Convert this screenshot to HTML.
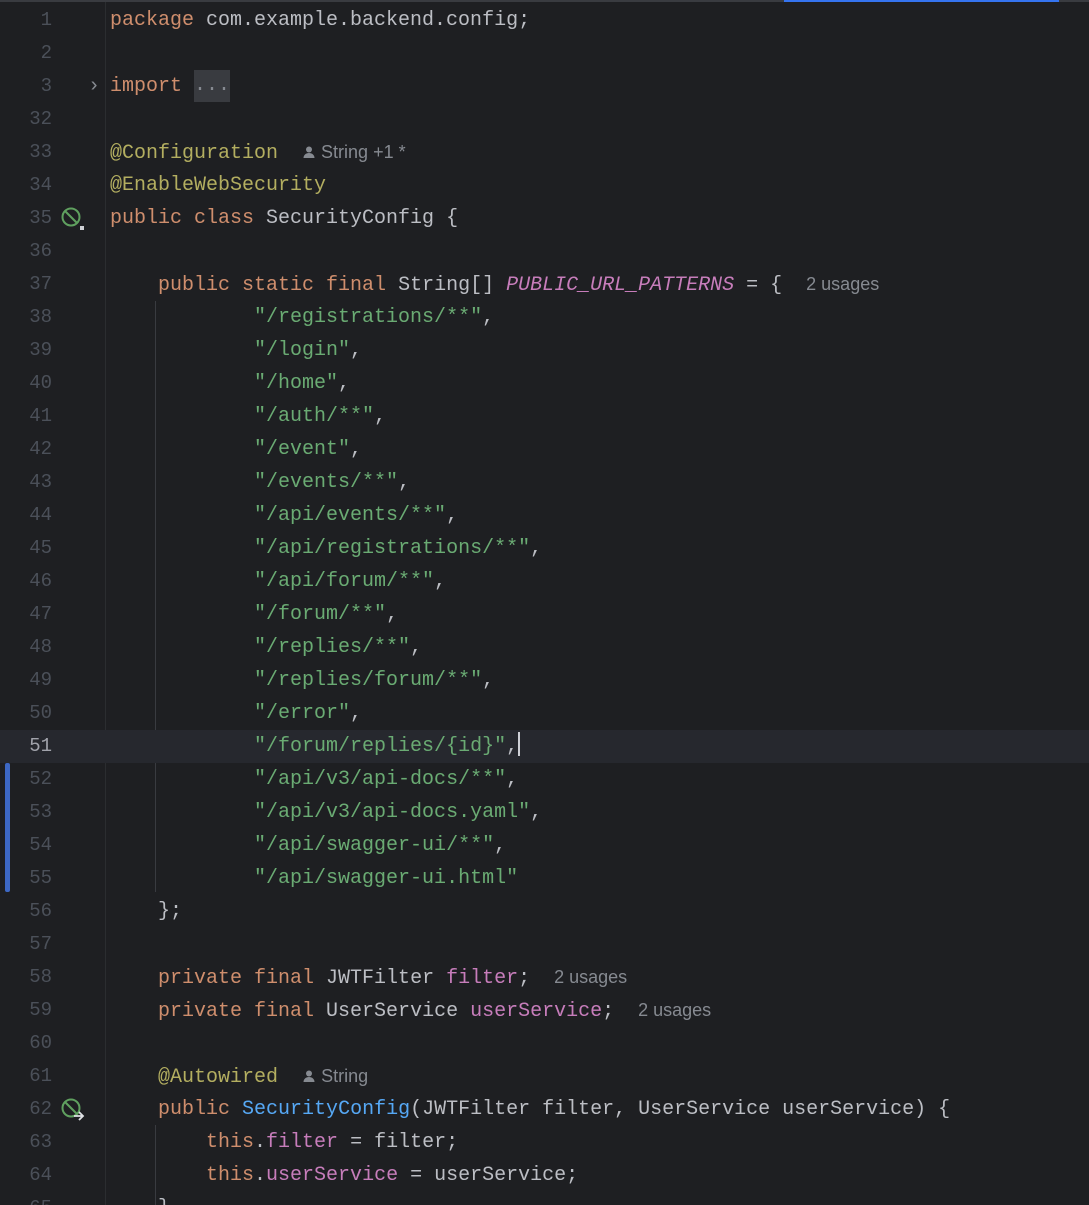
<!DOCTYPE html>
<html><head><meta charset="utf-8"><style>
html,body{margin:0;padding:0;background:#1e1f22;width:1089px;height:1205px;overflow:hidden;position:relative}
.l{position:absolute;left:0;width:1089px;height:33px;line-height:33px;font-family:"Liberation Mono",monospace;font-size:20px;color:#bcbec4;white-space:pre}
.n{position:absolute;left:0;width:52px;text-align:right;color:#4b5059;font-size:19px}
.c{position:absolute;left:110px}
.k{color:#cf8e6d}.s{color:#6aab73}.a{color:#b3ae60}.f{color:#c77dbb}.fi{color:#c77dbb;font-style:italic}.m{color:#56a8f5}
.h{font-family:"Liberation Sans",sans-serif;font-size:18px;color:#868a91}
.cur{background:#26282e}
</style></head><body>
<div style="position:absolute;left:0;top:0;width:1089px;height:2px;background:#393b40"></div>
<div style="position:absolute;left:784px;top:0;width:275px;height:2px;background:#3574f0"></div>
<div style="position:absolute;left:105px;top:2px;width:1px;height:1203px;background:#2b2d30"></div>
<div style="position:absolute;left:5px;top:763px;width:5px;height:129px;background:#3d68c4;border-radius:2px"></div>
<div style="position:absolute;left:155px;top:301px;width:1px;height:591px;background:#393b40"></div>
<div style="position:absolute;left:155px;top:1125px;width:1px;height:80px;background:#393b40"></div>
<div class="l cur" style="top:730px"></div>

<div class="l" style="top:4px"><span class="n">1</span><span class="c"><span class="k">package</span> com.example.backend.config;</span></div>
<div class="l" style="top:37px"><span class="n">2</span></div>
<div class="l" style="top:70px"><span class="n">3</span><span style="position:absolute;left:88px;color:#868a91">›</span><span class="c"><span class="k">import</span> <span style="background:#393b40;color:#868a91;display:inline-block;height:32px;line-height:32px;vertical-align:top">...</span></span></div>
<div class="l" style="top:103px"><span class="n">32</span></div>
<div class="l" style="top:136px"><span class="n">33</span><span class="c"><span class="a">@Configuration</span>  <span class="h"><svg width="14" height="14" viewBox="0 0 14 14" style="vertical-align:-1px"><circle cx="7" cy="4.5" r="3" fill="#868a91"/><path d="M1.5 13c0-3 2.5-5 5.5-5s5.5 2 5.5 5z" fill="#868a91"/></svg> String +1 *</span></span></div>
<div class="l" style="top:169px"><span class="n">34</span><span class="c"><span class="a">@EnableWebSecurity</span></span></div>
<div class="l" style="top:202px"><span class="n">35</span><svg style="position:absolute;left:61px;top:5px" width="24" height="24" viewBox="0 0 24 24"><circle cx="10" cy="10" r="8.5" fill="none" stroke="#5fa05f" stroke-width="2"/><path d="M4 4L16 16" stroke="#5fa05f" stroke-width="2"/><path d="M19 19h4v4h-4z" fill="#cfd1d6"/></svg><span class="c"><span class="k">public class</span> SecurityConfig {</span></div>
<div class="l" style="top:235px"><span class="n">36</span></div>
<div class="l" style="top:268px"><span class="n">37</span><span class="c">    <span class="k">public static final</span> String[] <span class="fi">PUBLIC_URL_PATTERNS</span> = {  <span class="h">2 usages</span></span></div>
<div class="l" style="top:301px"><span class="n">38</span><span class="c">            <span class="s">"/registrations/**"</span>,</span></div>
<div class="l" style="top:334px"><span class="n">39</span><span class="c">            <span class="s">"/login"</span>,</span></div>
<div class="l" style="top:367px"><span class="n">40</span><span class="c">            <span class="s">"/home"</span>,</span></div>
<div class="l" style="top:400px"><span class="n">41</span><span class="c">            <span class="s">"/auth/**"</span>,</span></div>
<div class="l" style="top:433px"><span class="n">42</span><span class="c">            <span class="s">"/event"</span>,</span></div>
<div class="l" style="top:466px"><span class="n">43</span><span class="c">            <span class="s">"/events/**"</span>,</span></div>
<div class="l" style="top:499px"><span class="n">44</span><span class="c">            <span class="s">"/api/events/**"</span>,</span></div>
<div class="l" style="top:532px"><span class="n">45</span><span class="c">            <span class="s">"/api/registrations/**"</span>,</span></div>
<div class="l" style="top:565px"><span class="n">46</span><span class="c">            <span class="s">"/api/forum/**"</span>,</span></div>
<div class="l" style="top:598px"><span class="n">47</span><span class="c">            <span class="s">"/forum/**"</span>,</span></div>
<div class="l" style="top:631px"><span class="n">48</span><span class="c">            <span class="s">"/replies/**"</span>,</span></div>
<div class="l" style="top:664px"><span class="n">49</span><span class="c">            <span class="s">"/replies/forum/**"</span>,</span></div>
<div class="l" style="top:697px"><span class="n">50</span><span class="c">            <span class="s">"/error"</span>,</span></div>
<div class="l" style="top:730px"><span class="n" style="color:#a1a3ab">51</span><span class="c">            <span class="s">"/forum/replies/{id}"</span>,<span style="display:inline-block;width:2px;height:24px;background:#ced0d6;vertical-align:-5px"></span></span></div>
<div class="l" style="top:763px"><span class="n">52</span><span class="c">            <span class="s">"/api/v3/api-docs/**"</span>,</span></div>
<div class="l" style="top:796px"><span class="n">53</span><span class="c">            <span class="s">"/api/v3/api-docs.yaml"</span>,</span></div>
<div class="l" style="top:829px"><span class="n">54</span><span class="c">            <span class="s">"/api/swagger-ui/**"</span>,</span></div>
<div class="l" style="top:862px"><span class="n">55</span><span class="c">            <span class="s">"/api/swagger-ui.html"</span></span></div>
<div class="l" style="top:895px"><span class="n">56</span><span class="c">    };</span></div>
<div class="l" style="top:928px"><span class="n">57</span></div>
<div class="l" style="top:961px"><span class="n">58</span><span class="c">    <span class="k">private final</span> JWTFilter <span class="f">filter</span>;  <span class="h">2 usages</span></span></div>
<div class="l" style="top:994px"><span class="n">59</span><span class="c">    <span class="k">private final</span> UserService <span class="f">userService</span>;  <span class="h">2 usages</span></span></div>
<div class="l" style="top:1027px"><span class="n">60</span></div>
<div class="l" style="top:1060px"><span class="n">61</span><span class="c">    <span class="a">@Autowired</span>  <span class="h"><svg width="14" height="14" viewBox="0 0 14 14" style="vertical-align:-1px"><circle cx="7" cy="4.5" r="3" fill="#868a91"/><path d="M1.5 13c0-3 2.5-5 5.5-5s5.5 2 5.5 5z" fill="#868a91"/></svg> String</span></span></div>
<div class="l" style="top:1093px"><span class="n">62</span><svg style="position:absolute;left:61px;top:5px" width="24" height="24" viewBox="0 0 24 24"><circle cx="10" cy="10" r="8.5" fill="none" stroke="#5fa05f" stroke-width="2"/><path d="M4 4L16 16" stroke="#5fa05f" stroke-width="2"/><path d="M13 18h9M18 14l4 4-4 4" fill="none" stroke="#dfe1e5" stroke-width="1.8"/></svg><span class="c">    <span class="k">public</span> <span class="m">SecurityConfig</span>(JWTFilter filter, UserService userService) {</span></div>
<div class="l" style="top:1126px"><span class="n">63</span><span class="c">        <span class="k">this</span>.<span class="f">filter</span> = filter;</span></div>
<div class="l" style="top:1159px"><span class="n">64</span><span class="c">        <span class="k">this</span>.<span class="f">userService</span> = userService;</span></div>
<div class="l" style="top:1192px"><span class="n">65</span><span class="c">    }</span></div>
</body></html>
